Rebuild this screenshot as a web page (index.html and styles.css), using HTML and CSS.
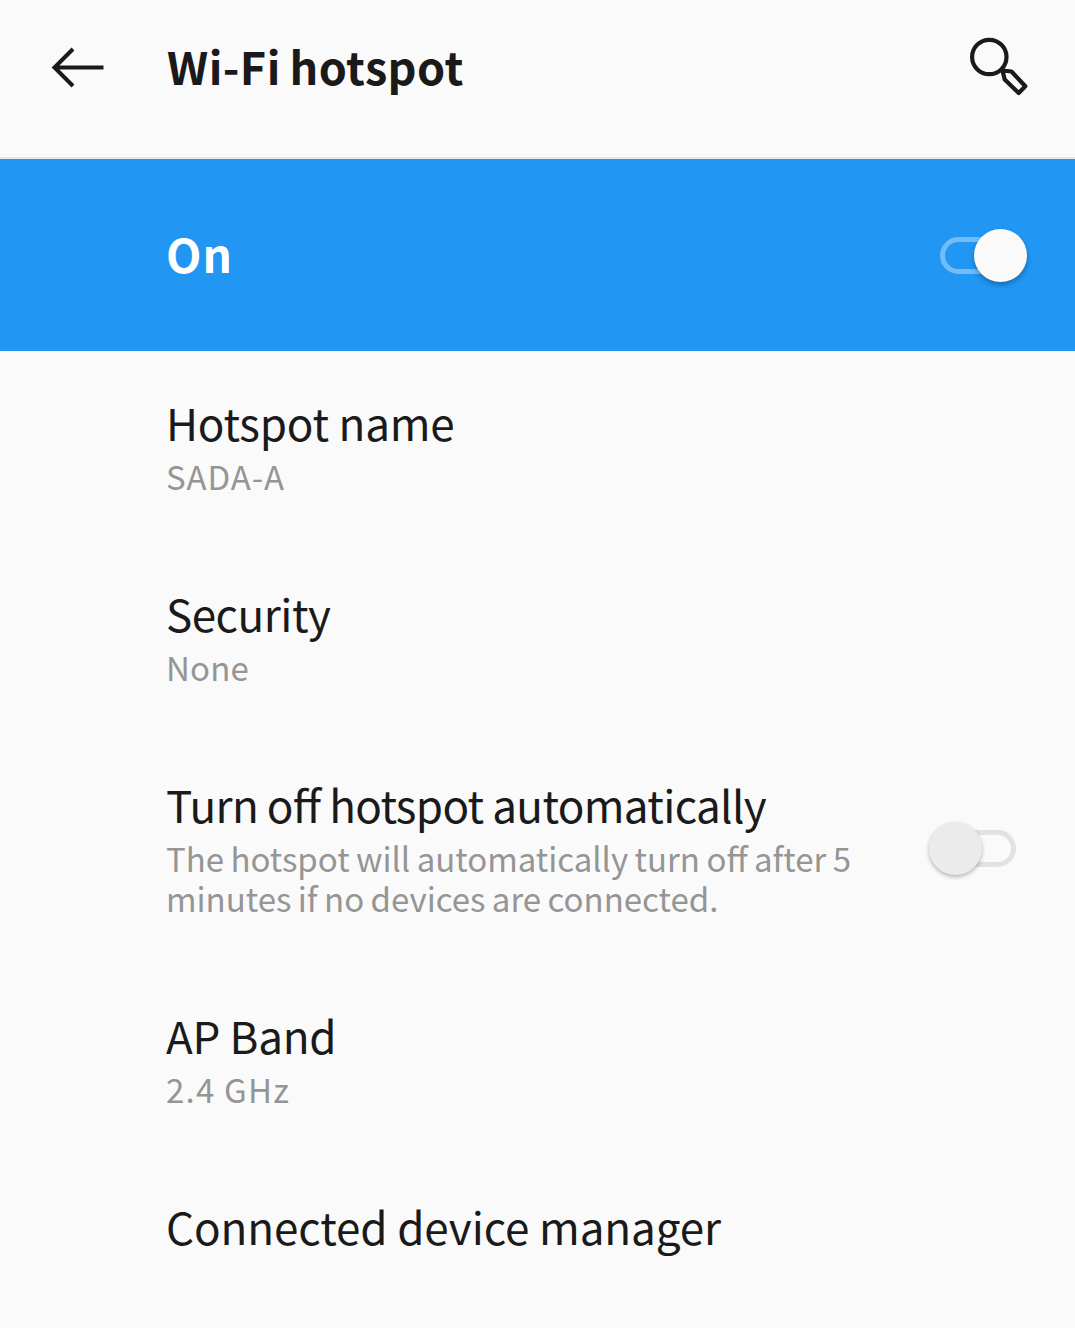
FILE: index.html
```html
<!DOCTYPE html>
<html lang="en">
<head>
<meta charset="utf-8">
<title>Wi-Fi hotspot</title>
<link rel="stylesheet" href="styles.css">
</head>
<body>
<header class="app-bar">
  <svg class="back-icon" width="56" height="44" viewBox="0 0 56 44" fill="none" stroke="#1a1a1a" stroke-width="4"><path d="M53.500 21.500H4.500M23 3L4.500 21.500L23 40"/></svg>
  <h1 class="page-title">Wi-Fi hotspot</h1>
  <svg class="search-icon" width="60" height="60" viewBox="0 0 60 60" fill="none" stroke="#1a1a1a" stroke-width="4.200" stroke-linejoin="round"><circle cx="20.300" cy="20" r="17.200"/><path d="M33.500 33.500L42.500 34.500L56.300 49.300L49.700 56L35.700 42.500Z"/></svg>
</header>
<section class="master-switch">
  <span class="master-label">On</span>
  <span class="switch switch-on"><span class="track"></span><span class="thumb"></span></span>
</section>
<main class="settings">
  <div class="row">
    <div class="label name">Hotspot name</div>
    <div class="summary ssid">SADA-A</div>
  </div>
  <div class="row">
    <div class="label security">Security</div>
    <div class="summary none">None</div>
  </div>
  <div class="row row-switch">
    <div class="text">
      <div class="label auto">Turn off hotspot automatically</div>
      <div class="summary detail">The hotspot will automatically turn off after 5<br>minutes if no devices are connected.</div>
    </div>
    <span class="switch switch-off"><span class="track"></span><span class="thumb"></span></span>
  </div>
  <div class="row">
    <div class="label band">AP Band</div>
    <div class="summary ghz">2.4 GHz</div>
  </div>
  <div class="row">
    <div class="label manager">Connected device manager</div>
  </div>
</main>
</body>
</html>
```

FILE: styles.css
```css
* { box-sizing: border-box; }
body {
  margin: 0;
  height: 1328px;
  overflow: hidden;
  background: #fafafa;
  color: #1a1a1a;
  font-family: "Noto Sans CJK SC", "Noto Sans", sans-serif;
  font-feature-settings: "liga" 1;
  white-space: nowrap;
}
.app-bar {
  display: flex;
  align-items: flex-start;
  height: 159px;
  padding: 35px 46px 0 50px;
  border-bottom: 2px solid #e0e9ee;
}
.back-icon { margin-top: 11px; }
.page-title {
  flex: 1;
  margin: 1px 0 0 61px;
  font-size: 45px;
  line-height: 60px;
  font-weight: 700;
  letter-spacing: .45px;
  word-spacing: -2px;
}
.search-icon { margin-top: 2px; }
.master-switch {
  display: flex;
  align-items: center;
  justify-content: space-between;
  height: 192px;
  padding: 0 48px 0 166px;
  background: #2196f3;
}
.master-label {
  padding-bottom: 4px;
  color: #fff;
  font-size: 46px;
  line-height: 60px;
  font-weight: 700;
  letter-spacing: 1px;
}
.switch {
  position: relative;
  flex: none;
  width: 87px;
  height: 53px;
}
.track {
  position: absolute;
  top: 8px;
  width: 76px;
  height: 37px;
  border: 5px solid #e2e2e2;
  border-radius: 19px;
}
.thumb {
  position: absolute;
  top: 0;
  width: 53px;
  height: 53px;
  border-radius: 50%;
}
.switch-on .track { left: 0; border-color: #72bcf8; }
.switch-on .thumb { right: 0; background: #fafafa; box-shadow: 0 3px 5px rgba(0, 0, 0, .28); }
.switch-off { margin-top: 4px; }
.switch-off .track { right: 0; }
.switch-off .thumb { left: 0; background: #ebebeb; box-shadow: 0 2px 4px rgba(0, 0, 0, .28); }
.row {
  height: 191px;
  padding: 41px 59px 46px 166px;
}
.row-switch {
  display: flex;
  align-items: center;
  justify-content: space-between;
  height: 231px;
}
.label {
  font-size: 44px;
  line-height: 60px;
}
.summary {
  margin-top: 4px;
  color: #959595;
  font-size: 33px;
  line-height: 40px;
}
.name { letter-spacing: -.2px; }
.security { letter-spacing: -.5px; }
.auto { letter-spacing: -.65px; word-spacing: -.5px; }
.band { letter-spacing: -.3px; }
.manager { letter-spacing: -.1px; }
.ssid { letter-spacing: .9px; }
.none { letter-spacing: .2px; }
.ghz { letter-spacing: 1.2px; }
.detail { letter-spacing: -.02px; word-spacing: -.9px; }
```
